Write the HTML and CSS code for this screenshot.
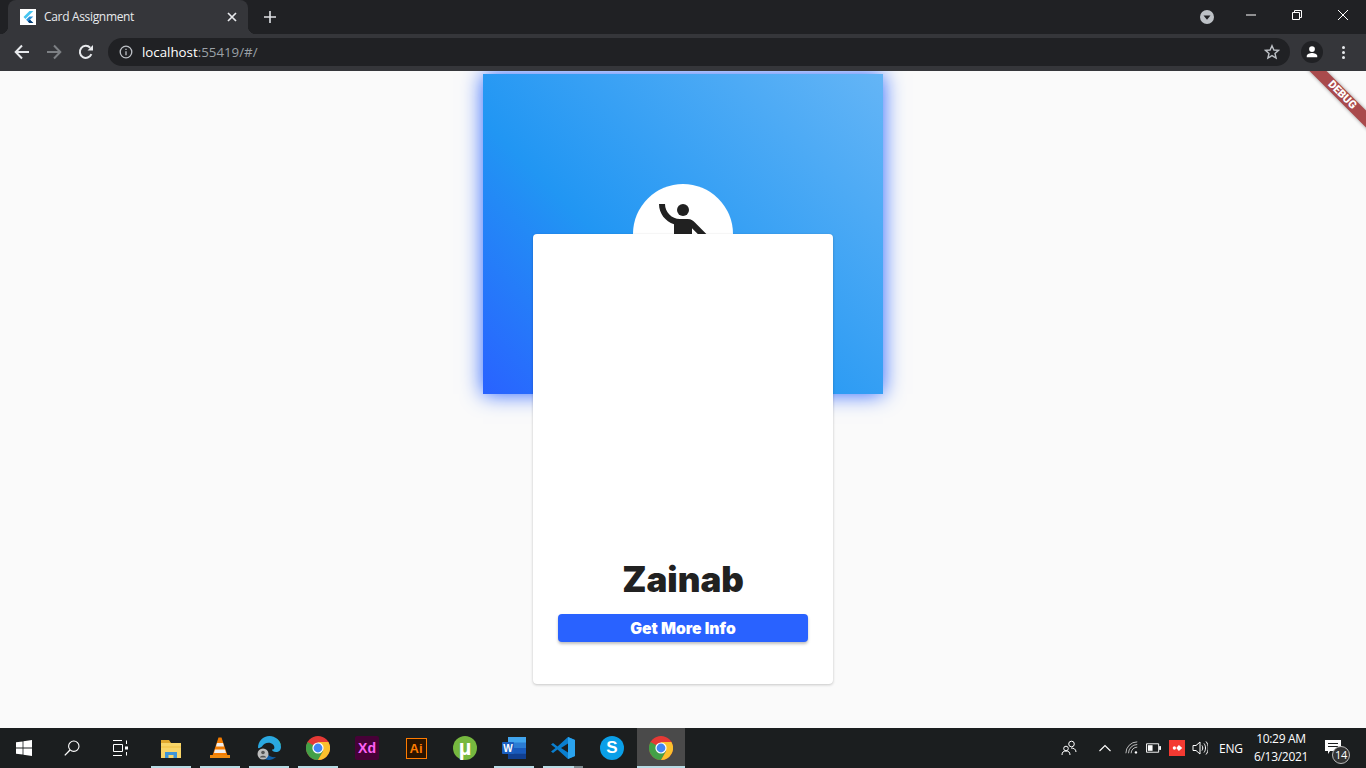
FILE: index.html
```html
<!DOCTYPE html>
<html lang="en">
<head>
<meta charset="utf-8">
<title>Card Assignment</title>
<link rel="stylesheet" href="styles.css">
</head>
<body>
<svg class="defs" width="0" height="0" aria-hidden="true">
  <symbol id="chrome" viewBox="0 0 24 24">
    <circle cx="12" cy="12" r="12" fill="#e53935"/>
    <path d="M12 12 1.6 6A12 12 0 0 0 12 24l5.2-9z" fill="#43a047"/>
    <path d="M12 6h10.4A12 12 0 0 1 12 24l5.2-9z" fill="#fbc02d"/>
    <circle cx="12" cy="12" r="5.6" fill="#fff"/>
    <circle cx="12" cy="12" r="4.4" fill="#4285f4"/>
  </symbol>
</svg>
<div class="chrome">
  <div class="tabstrip">
    <div class="tab">
      <svg class="favicon" viewBox="0 0 16 16"><rect width="16" height="16" fill="#fff"/><path d="M9.5 2 3.5 8l1.9 1.9L13.4 2z" fill="#45c5f0"/><path d="M9.4 7.6 6.1 10.8l3.3 3.2h3.9l-3.3-3.2 3.3-3.2z" fill="#2a8fd8"/><path d="M7.9 12.5 9.4 14h3.9l-3.3-3.2z" fill="#0b3f73"/></svg>
      <span class="tab-title">Card Assignment</span>
      <svg class="tab-close" viewBox="0 0 10 10"><path d="M1 1l8 8M9 1 1 9" stroke="#e8eaed" stroke-width="1.7" fill="none"/></svg>
    </div>
    <svg class="new-tab" viewBox="0 0 12 12"><path d="M6 0v12M0 6h12" stroke="#dfe1e5" stroke-width="1.6" fill="none"/></svg>
    <div class="caption">
      <svg class="profile-dot" viewBox="0 0 14 14"><circle cx="7" cy="7" r="7" fill="#bdc1c6"/><path d="M3.5 5.5h7L7 9.8z" fill="#202124"/></svg>
      <svg class="cap-btn" viewBox="0 0 12 12"><path d="M1 6h10" stroke="#fff" stroke-width="1" fill="none"/></svg>
      <svg class="cap-btn" viewBox="0 0 12 12"><path d="M1.5 3.5h7v7h-7zM3.5 3.5v-2h7v7h-2" stroke="#fff" stroke-width="1" fill="none"/></svg>
      <svg class="cap-btn" viewBox="0 0 12 12"><path d="M1 1l10 10M11 1 1 11" stroke="#fff" stroke-width="1" fill="none"/></svg>
    </div>
  </div>
  <div class="toolbar">
    <svg class="nav" viewBox="0 0 16 16"><path d="M15 8H2M8 1.5 1.7 8 8 14.5" stroke="#e8eaed" stroke-width="2" fill="none"/></svg>
    <svg class="nav" viewBox="0 0 16 16"><path d="M1 8h13M8 1.5 14.3 8 8 14.5" stroke="#7d8084" stroke-width="2" fill="none"/></svg>
    <svg class="nav" viewBox="0 0 16 16"><path d="M13.4 10.2A6 6 0 1 1 12.2 3.7" stroke="#e8eaed" stroke-width="2" fill="none"/><path d="M9.5 6.6H15V1z" fill="#e8eaed"/></svg>
    <div class="omnibox">
      <svg class="info" viewBox="0 0 14 14"><circle cx="7" cy="7" r="5.8" stroke="#bdc1c6" stroke-width="1.3" fill="none"/><path d="M7 6.2v4M7 3.8v1.3" stroke="#bdc1c6" stroke-width="1.3" fill="none"/></svg>
      <span class="url"><span class="host">localhost</span>:55419/#/</span>
      <svg class="star" viewBox="0 0 16 16"><path d="M8 1.7l1.9 4.3 4.6.4-3.5 3 1.1 4.6L8 11.6 3.9 14 5 9.4l-3.5-3 4.6-.4z" stroke="#bdc1c6" stroke-width="1.4" fill="none"/></svg>
    </div>
    <div class="avatar"><svg viewBox="0 0 16 16"><circle cx="8" cy="4.6" r="3.3" fill="#fff"/><path d="M2 14v-1.5C2 10 5.5 9 8 9s6 1 6 3.5V14z" fill="#fff"/></svg></div>
    <div class="menu-dots"><i></i><i></i><i></i></div>
  </div>
</div>

<main class="stage">
  <div class="hero">
    <div class="circle">
      <svg class="person" viewBox="0 0 24 24"><circle cx="12" cy="4" r="2"/><path d="M15.89 8.11C15.5 7.72 14.83 7 13.53 7h-2.54C8.24 6.99 6 4.75 6 2H4c0 3.16 2.11 5.84 5 6.71V22h2v-6h2v6h2V10.05L18.95 14l1.41-1.41-4.47-4.48z"/></svg>
    </div>
  </div>
  <section class="card">
    <h1 class="name">Zainab</h1>
    <button class="more" type="button">Get More Info</button>
  </section>
  <div class="debug"><span>DEBUG</span></div>
</main>

<footer class="taskbar">
  <div class="sys">
    <div class="sys-item"><svg class="i16" viewBox="0 0 16 16"><path d="M0 2.3 6.6 1.4v6.2H0zM7.4 1.3 16 0v7.6H7.4zM0 8.4h6.6v6.2L0 13.7zM7.4 8.4H16V16l-8.6-1.3z" fill="#fff"/></svg></div>
    <div class="sys-item"><svg class="i16" viewBox="0 0 16 16"><circle cx="9.8" cy="6.2" r="5.2" stroke="#fff" stroke-width="1.1" fill="none"/><path d="M6 10 .8 15.4" stroke="#fff" stroke-width="1.3" fill="none"/></svg></div>
    <div class="sys-item"><svg class="i16" viewBox="0 0 16 16"><path d="M1 .5h9M1 15.500h9M1.500 4.500h9v7h-9z" stroke="#fff" stroke-width="1" fill="none"/><path d="M14.500 .5V4M14.500 12v3.500" stroke="#fff" stroke-width="1" fill="none"/><rect x="13" y="6.500" width="3" height="3" fill="#fff"/></svg></div>
  </div>
  <div class="pins">
    <div class="pin open"><svg class="i24" viewBox="0 0 24 24"><path d="M2 4h8l2 3h10v4H2z" fill="#e0a82e"/><rect x="2" y="7" width="20" height="15" fill="#f8d568"/><path d="M2 11h20" stroke="#f1bf42"/><path d="M6 22v-6h12v6h-3.500v-3h-5v3z" fill="#3d95d8"/></svg></div>
    <div class="pin open"><svg class="i24" viewBox="0 0 24 24"><path d="M10.500 1.500h3l6 18h-15z" fill="#f57c00"/><path d="M9 7h6l1 3.500H8zM7 13.500h10l1 3.500H6z" fill="#eee"/><path d="M2 19h20v3H2z" fill="#ef8a0f"/></svg></div>
    <div class="pin open"><svg class="i24" viewBox="0 0 24 24"><path d="M1 12C1 5 6 0 12.500 0 19 0 24 5 24 11c0 3-2 5-5 5-2.500 0-4-1-4-2.500 3 .5 3-3 1-5-3-3-9-2-11 2-1 1-3 2-4 1.500z" fill="#2aa8e0"/><path d="M24 11c0-6-5-11-11.500-11 5 0 9 3 10 7 .5 1.500 1.500 2 1.500 4z" fill="#3fd08b"/><path d="M9 13c0 5 4 9 10 8-2 2-5 3-7 3-3 0-5-1-6-3 1-3 2-6 3-8z" fill="#0f5fa8"/><circle cx="6" cy="18" r="5.500" fill="#bdbdbd"/><circle cx="6" cy="16.500" r="1.800" fill="#555"/><path d="M2.800 21.500c.5-2.500 6-2.500 6.400 0z" fill="#555"/></svg></div>
    <div class="pin open"><svg class="i24" viewBox="0 0 24 24"><use href="#chrome"/></svg></div>
    <div class="pin"><div class="xd">Xd</div></div>
    <div class="pin"><div class="ai">Ai</div></div>
    <div class="pin"><div class="ut">µ</div></div>
    <div class="pin open"><svg class="i24" viewBox="0 0 24 24"><rect x="6" y="1" width="18" height="22" rx="1" fill="#2b7cd3"/><rect x="6" y="1" width="18" height="5.500" fill="#41a5ee"/><rect x="6" y="12" width="18" height="5.500" fill="#185abd"/><rect x="6" y="17.500" width="18" height="5.500" fill="#103f91"/><rect y="6" width="12" height="12" rx="1" fill="#1a5ec0"/><text class="word-w" x="6" y="15.500">W</text></svg></div>
    <div class="pin open multi"><svg class="i24" viewBox="0 0 24 24"><path d="M17 1 24 4v16l-7 3L6.500 13.500 2 17 0 15.500 4.500 12 0 8.500 2 7l4.500 3.500z" fill="#0a7fcf"/><path d="M17 1 24 4v16l-7 3z" fill="#2aa3ee"/><path d="M17 7.500 10 12l7 4.500z" fill="#1b1e1f"/></svg></div>
    <div class="pin"><div class="sk">S</div></div>
    <div class="pin active"><svg class="i24" viewBox="0 0 24 24"><use href="#chrome"/></svg></div>
  </div>
  <div class="tray">
    <svg class="t-people" viewBox="0 0 16 16"><circle cx="10.500" cy="4" r="2.800" stroke="#fff" fill="none"/><circle cx="5" cy="8.500" r="2.300" stroke="#fff" fill="none"/><path d="M1 15c0-3 1.500-4 4-4s4 1 4 4M10 8c2.500 0 5 1 5 4" stroke="#fff" fill="none"/></svg>
    <svg class="t-caret" viewBox="0 0 12 8"><path d="M.5 7 6 1.500 11.500 7" stroke="#fff" stroke-width="1.100" fill="none"/></svg>
    <svg class="t-wifi" viewBox="0 0 16 16"><path d="M1 14a13 13 0 0 1 13-13M4 14a10 10 0 0 1 10-10M7 14a7 7 0 0 1 7-7" stroke="#d0d0d0" fill="none"/><circle cx="12.500" cy="13" r="1.400" fill="#fff"/></svg>
    <svg class="t-batt" viewBox="0 0 16 10"><path d="M.5 .5h13v9H.5z" stroke="#fff" fill="none"/><rect x="14" y="3" width="2" height="4" fill="#fff"/><rect x="2" y="2" width="5" height="6" fill="#fff"/></svg>
    <div class="t-red"><svg viewBox="0 0 16 16"><circle cx="4.500" cy="8" r="2.200" fill="#fff"/><path d="M7 8l3.500-4L15 8l-4.500 4z" fill="#fff"/></svg></div>
    <svg class="t-vol" viewBox="0 0 16 16"><path d="M1 5.500h3L8 2v12l-4-3.500H1z" stroke="#fff" fill="none"/><path d="M10 5.500c1 1.500 1 3.500 0 5M12 3.500c2 2.500 2 6.500 0 9M14 1.500c3 3.500 3 9.500 0 13" stroke="#fff" fill="none"/></svg>
    <span class="t-lang">ENG</span>
    <div class="t-clock"><span>10:29 AM</span><span>6/13/2021</span></div>
    <div class="t-note">
      <svg viewBox="0 0 16 14"><path d="M0 0h16v11H5l-2 3v-3H0z" fill="#fff"/><path d="M3 3.500h10M3 6.500h10" stroke="#1b1e1f" fill="none"/></svg>
      <span class="t-badge">14</span>
    </div>
  </div>
</footer>
</body>
</html>
```

FILE: styles.css
```css
* { box-sizing: border-box; }
html, body { margin: 0; height: 100%; }
body {
  width: 1366px;
  height: 768px;
  overflow: hidden;
  display: flex;
  flex-direction: column;
  background: #fafafa;
  font-family: "Open Sans", "Liberation Sans", sans-serif;
}
svg { display: block; flex: none; }
.defs { position: absolute; }

/* browser frame */
.chrome { flex: none; height: 71px; background: #35363a; }
.tabstrip {
  height: 34px;
  background: #202124;
  display: flex;
  align-items: center;
  padding-left: 8px;
}
.tab {
  position: relative;
  width: 240px;
  height: 34px;
  background: #35363a;
  border-radius: 8px 8px 0 0;
  display: flex;
  align-items: center;
  padding: 0 11px 0 12px;
}
.tab::before, .tab::after {
  content: "";
  position: absolute;
  bottom: 0;
  width: 8px;
  height: 8px;
}
.tab::before { left: -8px; background: radial-gradient(circle at 0 0, #202124 8px, #35363a 8.5px); }
.tab::after { right: -8px; background: radial-gradient(circle at 100% 0, #202124 8px, #35363a 8.5px); }
.favicon { width: 16px; height: 16px; }
.tab-title {
  margin: -1px 0 0 8px;
  flex: 1;
  color: #e8eaed;
  font-size: 12px;
  letter-spacing: -0.33px;
  white-space: nowrap;
}
.tab-close { width: 10px; height: 10px; }
.new-tab { width: 12px; height: 12px; margin-left: 16px; }
.caption { margin-left: auto; display: flex; align-items: center; height: 34px; }
.profile-dot { width: 14px; height: 14px; margin-right: 31px; }
.cap-btn { width: 12px; height: 12px; margin-right: 34px; margin-top: -5px; }
.cap-btn:last-child { margin-right: 17px; }

.toolbar { height: 37px; display: flex; align-items: center; padding: 0 0 1px 14px; }
.nav { width: 16px; height: 16px; margin-right: 16px; }
.omnibox {
  width: 1182px;
  height: 28px;
  margin-left: -2px;
  border-radius: 14px;
  background: #202124;
  display: flex;
  align-items: center;
  padding: 0 10px 0 11px;
}
.info { width: 14px; height: 14px; }
.url { margin-left: 9px; color: #9aa0a6; font-size: 13.3px; flex: 1; white-space: nowrap; }
.host { color: #fff; }
.star { width: 16px; height: 16px; }
.avatar {
  width: 22px;
  height: 22px;
  margin-left: 11px;
  border-radius: 50%;
  background: #202124;
  display: flex;
  align-items: center;
  justify-content: center;
}
.avatar svg { width: 14px; height: 14px; }
.menu-dots { margin-left: 19px; display: flex; flex-direction: column; gap: 2px; }
.menu-dots i { display: block; width: 3px; height: 3px; border-radius: 50%; background: #e8eaed; }

/* page */
.stage {
  position: relative;
  flex: 1;
  overflow: hidden;
  display: flex;
  flex-direction: column;
  align-items: center;
  padding-top: 3px;
}
.hero {
  width: 400px;
  height: 320px;
  flex: none;
  padding-top: 110px;
  display: flex;
  justify-content: center;
  background: linear-gradient(45deg, #2962ff 0%, #2196f3 38%, #64b5f6 100%);
  box-shadow: 0 0 20px #2962ff;
}
.circle {
  width: 100px;
  height: 100px;
  border-radius: 50%;
  background: #fff;
  display: flex;
  align-items: center;
  justify-content: center;
}
.person { width: 72px; height: 72px; fill: #212121; }
.card {
  position: relative;
  width: 300px;
  height: 450px;
  flex: none;
  margin-top: -160px;
  padding: 0 25px;
  background: #fff;
  border-radius: 4px;
  box-shadow: 0 1px 3px rgba(0, 0, 0, 0.2), 0 0 1px rgba(0, 0, 0, 0.1);
  display: flex;
  flex-direction: column;
  align-items: center;
}
.name {
  margin: 321px 0 0;
  height: 48px;
  line-height: 48px;
  font-family: Inter, Lato, "Liberation Sans", sans-serif;
  font-weight: 900;
  font-size: 35px;
  color: #212121;
}
.more {
  margin-top: 11px;
  width: 250px;
  height: 28px;
  border: 0;
  border-radius: 4px;
  background: #2962ff;
  box-shadow: 0 2px 3px rgba(0, 0, 0, 0.25);
  color: #fff;
  font-family: Inter, Lato, "Liberation Sans", sans-serif;
  font-weight: 900;
  font-size: 15.7px;
  padding: 0;
}
.debug {
  position: absolute;
  left: 1282.25px;
  top: 17.75px;
  width: 120px;
  height: 12px;
  transform: rotate(45deg);
  background: #a94a4c;
  box-shadow: 0 0 4px rgba(0, 0, 0, 0.4);
  display: flex;
  align-items: center;
  justify-content: center;
}
.debug span {
  color: #fff;
  font-family: Roboto, "Liberation Sans", sans-serif;
  font-weight: 900;
  font-size: 11px;
  line-height: 12px;
}

/* taskbar */
.taskbar {
  flex: none;
  height: 40px;
  background: #1b1e1f;
  display: flex;
  align-items: stretch;
}
.sys { display: flex; width: 147px; }
.sys-item { width: 48px; display: flex; align-items: center; justify-content: center; }
.i16 { width: 16px; height: 16px; }
.i24 { width: 24px; height: 24px; }
.pins { display: flex; gap: 1px; }
.pin {
  position: relative;
  width: 48px;
  display: flex;
  align-items: center;
  justify-content: center;
}
.pin.open::after {
  content: "";
  position: absolute;
  left: 4px;
  right: 4px;
  bottom: 0;
  height: 2px;
  background: #b7dbe4;
}
.pin.multi::before {
  content: "";
  position: absolute;
  right: 4px;
  bottom: 0;
  width: 9px;
  height: 2px;
  background: #7b8a8e;
  z-index: 1;
}
.pin.active { background: #4a4a4a; }
.pin.active::after {
  content: "";
  position: absolute;
  left: 0;
  right: 0;
  bottom: 0;
  height: 2px;
  background: #b7dbe4;
}
.xd, .ai {
  width: 24px;
  height: 24px;
  display: flex;
  align-items: center;
  justify-content: center;
  font-family: "Liberation Sans", sans-serif;
  font-weight: 700;
  font-size: 14px;
}
.xd { background: #470137; color: #ff61f6; border-radius: 2px; }
.ai { width: 21px; height: 21px; background: #2b1400; color: #ff7c00; border: 1px solid #ff7c00; font-size: 13px; }
.ut {
  width: 24px;
  height: 24px;
  border-radius: 50%;
  background: #76b83f;
  color: #fff;
  display: flex;
  align-items: center;
  justify-content: center;
  font-family: "Liberation Sans", sans-serif;
  font-weight: 700;
  font-size: 22px;
  line-height: 24px;
}
.sk {
  width: 24px;
  height: 24px;
  border-radius: 50%;
  background: #0a9fe8;
  color: #fff;
  display: flex;
  align-items: center;
  justify-content: center;
  font-family: "Liberation Sans", sans-serif;
  font-weight: 700;
  font-size: 17px;
}
.word-w { fill: #fff; font-family: "Liberation Sans", sans-serif; font-weight: 700; font-size: 10px; text-anchor: middle; }

.tray { margin-left: auto; display: flex; align-items: center; color: #fff; }
.t-people { width: 16px; height: 16px; margin-right: 22px; }
.t-caret { width: 12px; height: 8px; margin-right: 14px; }
.t-wifi { width: 14px; height: 14px; margin-right: 7px; }
.t-batt { width: 15px; height: 10px; margin-right: 8px; }
.t-red { width: 16px; height: 16px; background: #f43a32; margin-right: 7px; display: flex; align-items: center; justify-content: center; }
.t-red svg { width: 12px; height: 12px; }
.t-vol { width: 16px; height: 16px; margin-right: 11px; }
.t-lang { font-size: 12px; width: 24px; margin-right: 11px; white-space: nowrap; letter-spacing: -0.2px; }
.t-clock {
  display: flex;
  flex-direction: column;
  align-items: center;
  width: 54px;
  font-size: 12px;
  line-height: 18px;
  letter-spacing: -0.3px;
  white-space: nowrap;
}
.t-note { position: relative; width: 58px; height: 40px; }
.t-note svg { position: absolute; left: 17px; top: 12px; width: 16px; height: 14px; }
.t-badge {
  position: absolute;
  left: 24px;
  top: 18px;
  width: 18px;
  height: 18px;
  border-radius: 50%;
  background: #333;
  border: 1px solid #bbb;
  font-size: 11px;
  line-height: 16px;
  text-align: center;
  letter-spacing: -0.3px;
}
```
